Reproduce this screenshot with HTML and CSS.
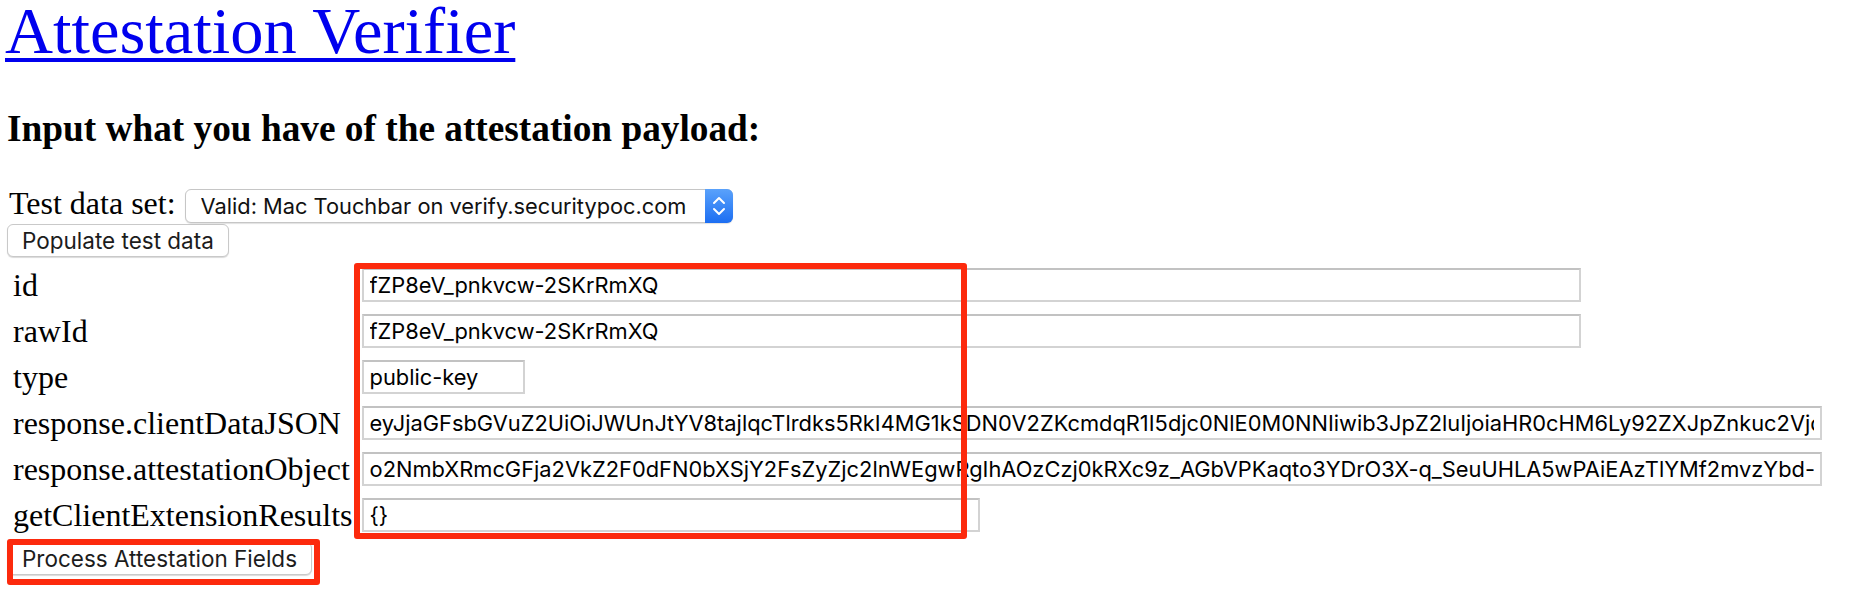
FILE: index.html
```html
<!DOCTYPE html>
<html lang="en">
<head>
<meta charset="utf-8">
<title>Attestation Verifier</title>
<link rel="stylesheet" href="styles.css">
</head>
<body>
<div class="page">
  <h1 class="title"><a href="#">Attestation Verifier</a></h1>
  <h3 class="subtitle">Input what you have of the attestation payload:</h3>
  <div class="dataset-row">
    <label class="dataset-label" for="dataset">Test data set:</label>
    <div class="select-wrap">
      <select id="dataset" class="select">
        <option>Valid: Mac Touchbar on verify.securitypoc.com</option>
      </select>
      <span class="select-arrow" aria-hidden="true">
        <svg width="28" height="34" viewBox="0 0 28 34"><path d="M9 14 L14 9 L19 14" fill="none" stroke="#fff" stroke-width="2" stroke-linecap="round" stroke-linejoin="round"/><path d="M9 20 L14 25 L19 20" fill="none" stroke="#fff" stroke-width="2" stroke-linecap="round" stroke-linejoin="round"/></svg>
      </span>
    </div>
  </div>
  <button class="btn btn-populate" type="button">Populate test data</button>
  <div class="fields">
    <label class="field-label" for="f-id">id</label>
    <input id="f-id" class="field-input w-long" type="text" value="fZP8eV_pnkvcw-2SKrRmXQ">
    <label class="field-label" for="f-rawid">rawId</label>
    <input id="f-rawid" class="field-input w-long" type="text" value="fZP8eV_pnkvcw-2SKrRmXQ">
    <label class="field-label" for="f-type">type</label>
    <input id="f-type" class="field-input w-short" type="text" value="public-key">
    <label class="field-label" for="f-cdj">response.clientDataJSON</label>
    <input id="f-cdj" class="field-input w-full" type="text" value="eyJjaGFsbGVuZ2UiOiJWUnJtYV8tajlqcTlrdks5RkI4MG1kSDN0V2ZKcmdqR1I5djc0NlE0M0NNIiwib3JpZ2luIjoiaHR0cHM6Ly92ZXJpZnkuc2VjdXJpdHlwb2MuY29tIiwidHlwZSI6IndlYmF1dGhuLmNyZWF0ZSJ9">
    <label class="field-label" for="f-ao">response.attestationObject</label>
    <input id="f-ao" class="field-input w-full" type="text" value="o2NmbXRmcGFja2VkZ2F0dFN0bXSjY2FsZyZjc2lnWEgwRgIhAOzCzj0kRXc9z_AGbVPKaqto3YDrO3X-q_SeuUHLA5wPAiEAzTlYMf2mvzYbd-Vd5fWcLm1pAmY8NRbB0pqq3Kb1Gq4">
    <label class="field-label" for="f-ext">getClientExtensionResults</label>
    <input id="f-ext" class="field-input w-mid" type="text" value="{}">
  </div>
  <button class="btn btn-process" type="button">Process Attestation Fields</button>
  <div class="annot annot-fields"></div>
  <div class="annot annot-button"></div>
</div>
</body>
</html>
```

FILE: styles.css
```css
* {
  box-sizing: border-box;
}

html,
body {
  margin: 0;
  padding: 0;
  background: #ffffff;
}

body {
  font-family: "Liberation Serif", "Times New Roman", serif;
  color: #000000;
}

.page {
  position: relative;
  width: 1850px;
  height: 602px;
  padding: 0 0 0 7px;
  overflow: hidden;
}

.title {
  margin: 0 0 45.6px -2px;
  font-size: 66.5px;
  line-height: 61px;
  font-weight: normal;
}

.title a {
  color: #0000ee;
  text-decoration: underline;
  text-decoration-thickness: 4px;
  text-underline-offset: 5px;
}

.subtitle {
  margin: 0 0 35px;
  font-size: 37.3px;
  line-height: 44px;
  font-weight: bold;
}

.dataset-row {
  display: flex;
  align-items: baseline;
  gap: 9px;
  padding-left: 2px;
}

.dataset-label {
  font-size: 32px;
  line-height: 34px;
  white-space: nowrap;
}

.select-wrap {
  position: relative;
  width: 548px;
  height: 34px;
}

.select {
  appearance: none;
  -webkit-appearance: none;
  display: block;
  width: 100%;
  height: 34px;
  margin: 0;
  padding: 0 0 0 15px;
  border: 1px solid #c6c6c6;
  border-radius: 6px;
  background: #ffffff;
  box-shadow: 0 1px 1px rgba(0, 0, 0, 0.12);
  font-family: Inter, "Liberation Sans", sans-serif;
  font-size: 21.8px;
  color: #111111;
}

.select-arrow {
  position: absolute;
  top: 0;
  right: 0;
  width: 28px;
  height: 34px;
  border-radius: 0 6px 6px 0;
  background: linear-gradient(#5aa2fb, #1c6ef2);
  display: flex;
}

.btn {
  display: block;
  height: 33px;
  margin: 1px 0 0;
  padding: 0 14px;
  border: 1px solid #c9c9c9;
  border-radius: 6px;
  background: #ffffff;
  box-shadow: 0 1px 1px rgba(0, 0, 0, 0.15);
  font-family: Inter, "Liberation Sans", sans-serif;
  font-size: 22.5px;
  color: #1c1c1c;
  white-space: nowrap;
}

.btn-process {
  margin-top: 10px;
}

.fields {
  display: grid;
  grid-template-columns: max-content max-content;
  column-gap: 9px;
  row-gap: 12px;
  align-items: center;
  margin-top: 11px;
  padding-left: 6px;
}

.field-label {
  font-size: 32px;
  line-height: 34px;
  white-space: nowrap;
}

.field-input {
  justify-self: start;
  height: 34px;
  margin: 0;
  padding: 0 6px;
  border: 2px solid #d3d3d3;
  border-top-color: #c2c2c2;
  background: #ffffff;
  font-family: Inter, "Liberation Sans", sans-serif;
  font-size: 21.85px;
  color: #000000;
}

.w-long {
  width: 1219px;
}

.w-short {
  width: 163px;
}

.w-full {
  width: 1460px;
}

.w-mid {
  width: 618px;
}

.annot {
  position: absolute;
  border: 6px solid #fc2a0d;
  border-radius: 3px;
  pointer-events: none;
}

.annot-fields {
  left: 354px;
  top: 263px;
  width: 613px;
  height: 276px;
}

.annot-button {
  left: 7px;
  top: 539px;
  width: 313px;
  height: 46px;
}
```
